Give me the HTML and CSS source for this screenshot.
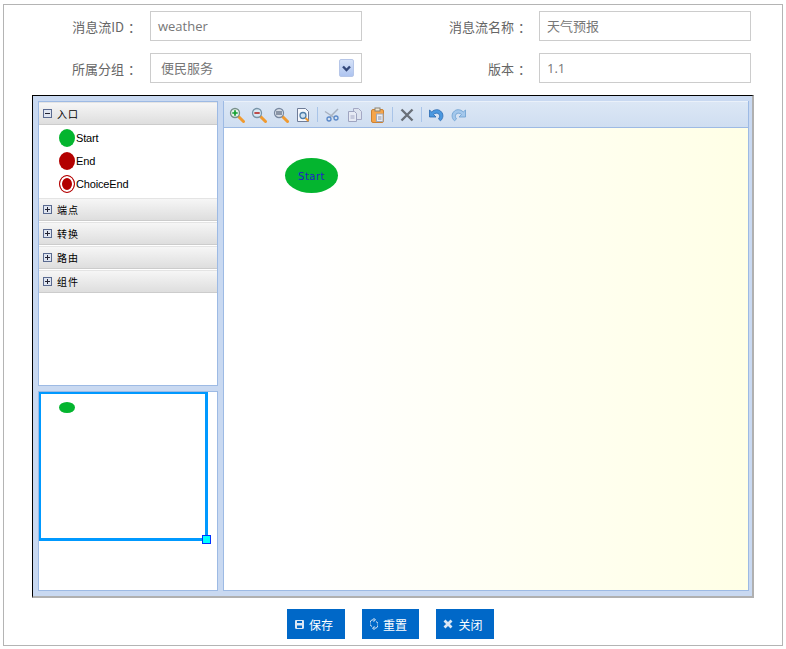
FILE: index.html
```html
<!DOCTYPE html>
<html lang="zh">
<head>
<meta charset="utf-8">
<title>消息流</title>
<link rel="stylesheet" href="styles.css">
</head>
<body>
<div class="frame">
  <form class="form">
    <div class="row">
      <label class="label">消息流ID<span class="colon">：</span></label>
      <div class="field latin">weather</div>
      <label class="label label-r">消息流名称<span class="colon">：</span></label>
      <div class="field">天气预报</div>
    </div>
    <div class="row">
      <label class="label">所属分组<span class="colon">：</span></label>
      <div class="field select">便民服务
        <span class="arrow"><svg width="13" height="16" viewBox="0 0 13 16"><path d="M3 6.500l3.500 3.500L10 6.500" fill="none" stroke="#33487a" stroke-width="2.400"/></svg></span>
      </div>
      <label class="label label-r">版本<span class="colon">：</span></label>
      <div class="field latin">1.1</div>
    </div>
  </form>

  <div class="editor">
    <div class="side">
      <div class="panel palette">
        <div class="group"><svg class="tog" width="9" height="9" viewBox="0 0 9 9"><rect x=".5" y=".5" width="8" height="8" fill="#dfe5f0" stroke="#5a6a90"/><path d="M2 4.500h5" stroke="#223"/></svg><span>入口</span></div>
        <div class="items">
          <div class="item"><span class="dot green"></span>Start</div>
          <div class="item"><span class="dot red"></span>End</div>
          <div class="item"><span class="dot ring"></span>ChoiceEnd</div>
        </div>
        <div class="group"><svg class="tog" width="9" height="9" viewBox="0 0 9 9"><rect x=".5" y=".5" width="8" height="8" fill="#dfe5f0" stroke="#5a6a90"/><path d="M2 4.500h5M4.500 2v5" stroke="#223"/></svg><span>端点</span></div>
        <div class="group"><svg class="tog" width="9" height="9" viewBox="0 0 9 9"><rect x=".5" y=".5" width="8" height="8" fill="#dfe5f0" stroke="#5a6a90"/><path d="M2 4.500h5M4.500 2v5" stroke="#223"/></svg><span>转换</span></div>
        <div class="group"><svg class="tog" width="9" height="9" viewBox="0 0 9 9"><rect x=".5" y=".5" width="8" height="8" fill="#dfe5f0" stroke="#5a6a90"/><path d="M2 4.500h5M4.500 2v5" stroke="#223"/></svg><span>路由</span></div>
        <div class="group"><svg class="tog" width="9" height="9" viewBox="0 0 9 9"><rect x=".5" y=".5" width="8" height="8" fill="#dfe5f0" stroke="#5a6a90"/><path d="M2 4.500h5M4.500 2v5" stroke="#223"/></svg><span>组件</span></div>
      </div>
      <div class="panel outline">
        <div class="viewport"><span class="mini"></span><span class="handle"></span></div>
      </div>
    </div>
    <div class="main">
      <div class="toolbar">
        <svg class="ic" width="16" height="16" viewBox="0 0 16 16"><path d="M9.500 9.500l5 5" stroke="#f09a30" stroke-width="3" stroke-linecap="round"/><circle cx="6" cy="6" r="4.500" fill="#e4f2e8" stroke="#78908a" stroke-width="1.300"/><path d="M3.300 6h5.400M6 3.300v5.400" stroke="#12a02e" stroke-width="1.700"/></svg>
        <svg class="ic" width="16" height="16" viewBox="0 0 16 16"><path d="M9.500 9.500l5 5" stroke="#f09a30" stroke-width="3" stroke-linecap="round"/><circle cx="6" cy="6" r="4.500" fill="#d8e8f4" stroke="#7894a8" stroke-width="1.300"/><path d="M3.300 6h5.400" stroke="#b8302c" stroke-width="1.700"/></svg>
        <svg class="ic" width="16" height="16" viewBox="0 0 16 16"><path d="M9.500 9.500l5 5" stroke="#f09a30" stroke-width="3" stroke-linecap="round"/><circle cx="6" cy="6" r="4.500" fill="#e8eef4" stroke="#7888a0" stroke-width="1.300"/><path d="M4 3.800v4.400M6 3.800v4.400M8 3.800v4.400" stroke="#2c3c58" stroke-width="1"/></svg>
        <svg class="ic" width="16" height="16" viewBox="0 0 16 16"><path d="M2.500 1.500h8l3 3v10h-11z" fill="#f6f8fc" stroke="#6e7c98"/><circle cx="8" cy="8.500" r="3" fill="#cfe2f2" stroke="#4f7ea8" stroke-width="1.300"/><path d="M10.500 11l3 3" stroke="#f09a30" stroke-width="2"/></svg>
        <span class="sep"></span>
        <svg class="ic" width="16" height="16" viewBox="0 0 16 16"><path d="M1 4.500l9 6M14 2L6 10" stroke="#a8b2c0" stroke-width="1.500"/><circle cx="5" cy="12" r="2" fill="none" stroke="#5a88c8" stroke-width="1.300"/><circle cx="12" cy="11" r="2" fill="none" stroke="#5a88c8" stroke-width="1.300"/></svg>
        <svg class="ic ic-shift" width="16" height="16" viewBox="0 0 16 16"><path d="M6.500 1.500h5l3 3v8h-8z" fill="#dde3ef" stroke="#a4a8c4"/><path d="M1.500 4.500h6l2 2v8h-8z" fill="#e6eaf4" stroke="#9ea4c0"/><path d="M3.500 9h4M3.500 11h4" stroke="#a4a8c4"/></svg>
        <svg class="ic ic-shift" width="16" height="16" viewBox="0 0 16 16"><rect x="1.500" y="2.500" width="12" height="13" rx="1.500" fill="#f6a54a" stroke="#cc8232"/><rect x="5" y="1" width="5" height="3" fill="#efe8d8" stroke="#8c8270"/><rect x="6.500" y="7" width="6.500" height="7.500" fill="#eceef4" stroke="#a0a8b8"/><path d="M8 10h3.500M8 12h3.500" stroke="#8c94a8"/></svg>
        <span class="sep"></span>
        <svg class="ic" width="16" height="16" viewBox="0 0 16 16"><path d="M2.500 2.500l11 11M13.500 2.500l-11 11" stroke="#6a7078" stroke-width="2.400"/></svg>
        <span class="sep"></span>
        <svg class="ic" width="16" height="16" viewBox="0 0 16 16"><path d="M1.500 3v7h6.500L5.500 7.500C7 5.800 9.800 5.800 11 7.200c1 1.300.8 3-.5 4.800l2 1.800c2.800-2.400 3.200-6.300 1-8.800C11 1.800 6.500 2 3.800 5z" fill="#4a98e0" stroke="#2a68b0" stroke-width=".8"/></svg>
        <svg class="ic ic-shift" width="16" height="16" viewBox="0 0 16 16"><path d="M14.500 3v7H8l2.500-2.500C9 5.800 6.200 5.800 5 7.200c-1 1.300-.8 3 .5 4.800l-2 1.800c-2.800-2.400-3.200-6.300-1-8.800C5 1.800 9.500 2 12.200 5z" fill="#a4c8ec" stroke="#6a9ed0" stroke-width=".8"/></svg>
      </div>
      <div class="canvas">
        <div class="node">Start</div>
      </div>
    </div>
  </div>

  <div class="actions">
    <button type="button" class="btn"><svg width="9" height="9" viewBox="0 0 9 9"><path d="M0 1.200C0 .5.500 0 1.200 0h6.600C8.500 0 9 .5 9 1.200v6.600C9 8.500 8.500 9 7.800 9H1.200C.5 9 0 8.500 0 7.800z" fill="#dbe7f5"/><path d="M2 1h5v2H2zM2 5.500h5V8H2z" fill="#0068c8"/></svg>保存</button>
    <button type="button" class="btn btn-narrow"><svg width="8" height="12" viewBox="0 0 8 12"><path d="M4.500 2A3.200 3.200 0 0 0 2 8.500M3.500 10A3.200 3.200 0 0 0 6 3.500" fill="none" stroke="#dbe7f5"/><path d="M3.500 0l2 2-2 1.500M4.500 12l-2-2 2-1.500" fill="none" stroke="#dbe7f5"/></svg>重置</button>
    <button type="button" class="btn"><svg width="10" height="10" viewBox="0 0 10 10"><path d="M1.500 1.500l7 7M8.500 1.500l-7 7" stroke="#dbe7f5" stroke-width="2.800"/></svg>关闭</button>
  </div>
</div>
</body>
</html>
```
FILE: styles.css
```css
* { box-sizing: border-box; }
html, body { margin: 0; padding: 0; background: #fff; }
body { font-family: "Noto Sans CJK SC", "Liberation Sans", sans-serif; width: 786px; height: 649px; overflow: hidden; padding: 4px 3px 0; }
.frame { width: 780px; height: 642px; border: 1px solid #b4b4b4; padding: 6px 28px 0; display: flex; flex-direction: column; }
.form { display: flex; flex-direction: column; gap: 12px; margin-bottom: 12px; }
.row { display: flex; align-items: center; height: 30px; }
.label { width: 118px; padding-right: 13px; font-size: 13px; color: #666; text-align: right; flex: none; white-space: nowrap; }
.label-r { width: 177px; padding-right: 12px; }
.colon { font-family: "Noto Sans CJK TC", sans-serif; margin-left: 4px; margin-right: -4px; }
.field { position: relative; flex: none; width: 212px; height: 30px; border: 1px solid #ccc; padding-left: 7px; font-size: 13px; line-height: 28px; color: #777; background: #fff; }
.latin { font-family: "Open Sans", "Liberation Sans", sans-serif; font-size: 13px; line-height: 29px; }
.select { padding-left: 10px; }
.arrow { position: absolute; right: 7px; top: 5px; width: 15px; height: 18px; border: 1px solid #b6c6e8; border-radius: 2px; background: linear-gradient(#d6e2f8, #aec4f0); display: flex; }
.editor { flex: none; width: 722px; height: 503px; border-top: 1px solid #000; border-left: 1px solid #000; border-right: 2px solid #b0b0b0; border-bottom: 2px solid #b0b0b0; background: #c9d9f1; padding: 5px 4px 5px 5px; display: flex; gap: 5px; }
.side { width: 180px; flex: none; display: flex; flex-direction: column; gap: 5px; }
.panel { background: #fff; border: 1px solid #9dbae4; }
.palette { height: 285px; }
.outline { height: 200px; position: relative; }
.group { height: 23px; margin-bottom: 1px; background: linear-gradient(#f6f6f6, #dedede); border-top: 1px solid #e4e4e4; border-bottom: 1px solid #ccc; display: flex; align-items: center; padding-left: 4px; font-size: 10px; color: #000; }
.group span { margin-left: 5px; letter-spacing: 1px; }
.tog { flex: none; }
.items { padding: 0 0 3px; }
.item { height: 23px; display: flex; align-items: center; padding-left: 20px; font-family: "Liberation Sans", sans-serif; font-size: 11px; letter-spacing: -.15px; color: #000; }
.dot { width: 16px; height: 18px; margin-right: 1px; border-radius: 50%; flex: none; }
.green { background: #04b52f; }
.red { background: #b30000; }
.ring { background: #b30000; box-shadow: inset 0 0 0 2px #fff; border: 1.500px solid #b30000; }
.viewport { position: absolute; left: 0; top: 0; width: 169px; height: 149px; border: 2px solid #0099ff; border-right-width: 3px; border-bottom-width: 3px; }
.mini { position: absolute; left: 18px; top: 8px; width: 16px; height: 11px; border-radius: 50%; background: #04b52f; }
.handle { position: absolute; right: -6px; bottom: -6px; width: 9px; height: 9px; background: #00ffff; border: 1px solid #0033ff; }
.main { width: 526px; flex: none; border: 1px solid #9dbae4; border-top: 0; display: flex; flex-direction: column; }
.toolbar { height: 27px; flex: none; background: linear-gradient(#dce7f5, #cfdef1); border-top: 1px solid #eaf1fa; border-bottom: 1px solid #9dbae4; display: flex; align-items: center; padding-left: 5px; gap: 6px; }
.ic { flex: none; }
.ic-shift { margin-left: 1px; }
.sep { width: 1px; height: 15px; background: #a9c4e8; flex: none; }
.canvas { position: relative; flex: 1; background: linear-gradient(90deg, #fff 15%, #fffff2 58%, #ffffe6 100%); }
.node { position: absolute; left: 61px; top: 30px; width: 53px; height: 35px; border-radius: 50%; background: #04b52f; color: #2020c8; font-family: "DejaVu Sans", sans-serif; font-size: 10px; letter-spacing: .5px; line-height: 37px; text-align: center; }
.actions { display: flex; justify-content: center; gap: 17px; margin-top: 11px; padding-right: 5px; }
.btn { width: 58px; height: 30px; border: 0; padding: 0 4px 0 0; background: #0068c8; color: #fff; font-family: "Noto Sans CJK SC", sans-serif; font-size: 12px; display: flex; align-items: center; justify-content: center; gap: 5px; }
.btn-narrow { width: 57px; }
```
